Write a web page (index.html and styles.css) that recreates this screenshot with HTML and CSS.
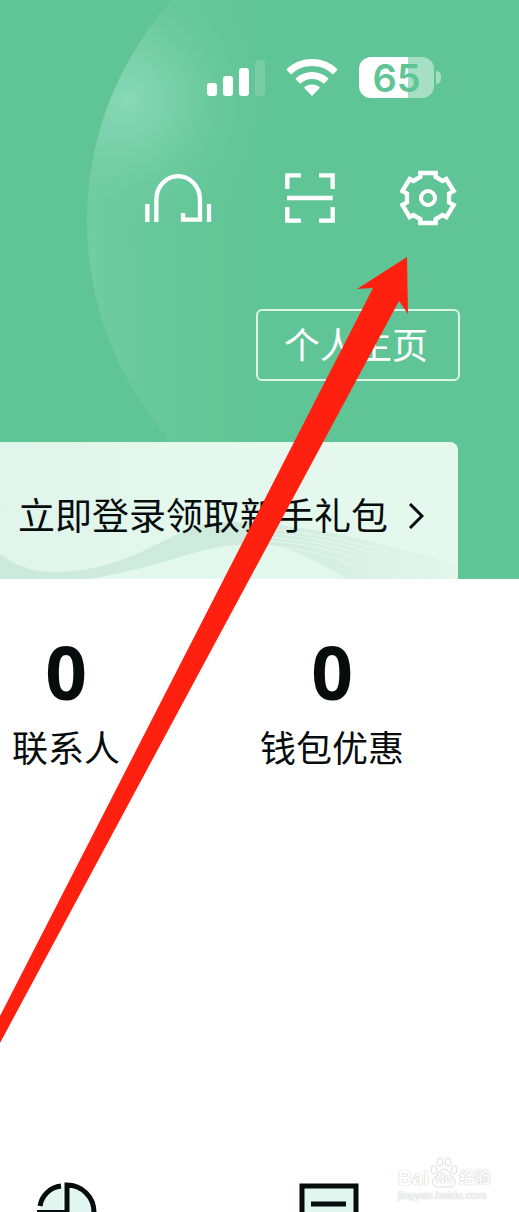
FILE: index.html
```html
<!DOCTYPE html>
<html lang="zh-CN">
<head>
    <meta charset="UTF-8">
    <meta name="viewport" content="width=device-width, initial-scale=1.0">
    <title>个人主页</title>
    <link rel="stylesheet" href="styles.css">
</head>
<body>
    <header class="header">
        <svg class="bubble" viewBox="0 0 660 660" aria-hidden="true">
            <defs>
                <radialGradient id="glow" gradientUnits="userSpaceOnUse" cx="40" cy="208" r="150">
                    <stop offset="0" stop-color="#8cdaba" stop-opacity="0.9"/>
                    <stop offset="0.4" stop-color="#7cd2ac" stop-opacity="0.6"/>
                    <stop offset="1" stop-color="#60c596" stop-opacity="0"/>
                </radialGradient>
                <linearGradient id="rim" x1="0" y1="0" x2="0.28" y2="0">
                    <stop offset="0" stop-color="#72cda3"/>
                    <stop offset="1" stop-color="#60c596" stop-opacity="0"/>
                </linearGradient>
            </defs>
            <circle cx="330" cy="330" r="330" fill="url(#rim)"/>
            <circle cx="330" cy="330" r="330" fill="url(#glow)"/>
        </svg>

        <div class="status">
            <svg class="signal" viewBox="0 0 58 38" aria-hidden="true">
                <rect x="0" y="24" width="10" height="13" rx="3"/>
                <rect x="16" y="17" width="10" height="20" rx="3"/>
                <rect x="32" y="9" width="10" height="28" rx="3"/>
                <rect x="48" y="1" width="10" height="36" rx="3" opacity="0.15"/>
            </svg>
            <svg class="wifi" viewBox="0 0 50 38" aria-hidden="true">
                <path d="M1.7 12.9A33.5 33.5 0 0 1 48.3 12.9M10.8 22.3A20.5 20.5 0 0 1 39.2 22.3" fill="none" stroke="#fff" stroke-width="7"/>
                <path d="M17 28.7A11.5 11.5 0 0 1 33 28.7L25 37Z"/>
            </svg>
            <div class="battery"><span>65</span></div>
        </div>

        <nav class="tools">
            <button class="tool tool-service" aria-label="客服">
                <svg viewBox="45 45 225 168"><path d="M52 147V201M237 147V201M79 201V134A65 70 0 0 1 210 134V194H159V174" stroke-width="13"/></svg>
            </button>
            <button class="tool" aria-label="扫一扫">
                <svg viewBox="450 45 180 168"><path d="M472 102V61H513M567 61H608V102M472 156V197H513M567 197H608V156M471 129H608" stroke-width="13"/></svg>
            </button>
            <button class="tool" aria-label="设置">
                <svg viewBox="180 45 180 168">
                    <path d="M241 54H287V66L308 78L319 72L341 108L327 116V142L341 150L319 186L308 180L287 192V204H241V192L220 180L209 186L187 150L201 142V116L187 108L209 72L220 78L241 66Z" stroke-width="13"/>
                    <circle cx="264" cy="129" r="21" stroke-width="12"/>
                </svg>
            </button>
        </nav>

        <button class="home">个人主页</button>

        <a class="gift" href="#">
            <svg class="waves" viewBox="0 0 458 137" preserveAspectRatio="none" aria-hidden="true">
                <defs>
                    <linearGradient id="wave" x1="0" y1="0" x2="1" y2="0">
                        <stop offset="0" stop-color="#cbeadb"/>
                        <stop offset="0.55" stop-color="#d0ebde"/>
                        <stop offset="1" stop-color="#e2f6eb"/>
                    </linearGradient>
                </defs>
                <path d="M0 112Q25 132 62 130C140 126 170 84 220 80C300 78 400 105 458 124V137H346C290 98 240 98 190 112Q130 132 90 137H0Z" fill="url(#wave)"/>
                <path d="M190 112Q260 92 300 112Q325 124 346 137H90Q140 128 190 112Z" fill="#e2f8ec"/>
                <path d="M250 86Q350 90 458 134M250 90Q350 94 440 137M250 94Q350 98 420 137M250 98Q340 100 400 137M250 102Q330 106 380 137" fill="none" stroke="#e4f8ed"/>
            </svg>
            <span>立即登录领取新手礼包</span>
            <svg class="chevron" viewBox="0 0 16 26" aria-hidden="true"><path d="M2 1L14 13L2 25"/></svg>
        </a>
    </header>

    <main>
        <section class="stats">
            <div class="stat"><strong>0</strong><span>联系人</span></div>
            <div class="stat"><strong>0</strong><span>钱包优惠</span></div>
        </section>
        <section class="menu">
            <svg viewBox="0 0 60 30" aria-hidden="true">
                <path d="M3 27A28 28 0 0 1 26 4V28H3Z" fill="#e1f6ee"/>
                <path d="M30 3A27 27 0 0 1 57 30H30Z" fill="#e1f6ee"/>
                <path d="M3 24A24 24 0 0 1 24 4M30 30V3A27 27 0 0 1 57 30" fill="none" stroke="#070c0d" stroke-width="5"/>
                <path d="M0 29H28" stroke="#070c0d" stroke-width="2"/>
            </svg>
            <svg viewBox="0 0 60 30" aria-hidden="true">
                <path d="M3 30V4H57V30" fill="#e1f6ee" stroke="#070c0d" stroke-width="5"/>
                <path d="M12 22H47" stroke="#070c0d" stroke-width="5"/>
            </svg>
        </section>
    </main>

    <div class="watermark">
        <div class="brand">
            <span>Bai</span>
            <span class="paw">
                <svg viewBox="0 0 28 31" aria-hidden="true">
                    <ellipse cx="4" cy="13" rx="3" ry="4"/>
                    <ellipse cx="10" cy="5" rx="3" ry="4"/>
                    <ellipse cx="18" cy="5" rx="3" ry="4"/>
                    <ellipse cx="24" cy="13" rx="3" ry="4"/>
                    <path d="M14 12C19 12 19 18 23 20C27 24 25 30 20 30H8C2 30 1 24 5 20C9 18 9 12 14 12Z"/>
                </svg>
                <b>du</b>
            </span>
            <span class="cn">经验</span>
        </div>
        <div class="site">jingyan.baidu.com</div>
    </div>

    <svg class="arrow" viewBox="0 0 519 1212" aria-hidden="true">
        <path d="M407 257L357 289L373 288L0 1016V1043L399 301L408 314Z" fill="#ff2010"/>
    </svg>
</body>
</html>
```
FILE: styles.css
```css
* {
    box-sizing: border-box;
}
body {
    margin: 0;
    position: relative;
    background: #fff;
    color: #070c0d;
    font-family: "Noto Sans CJK SC", sans-serif;
    font-size: 36px;
    line-height: 48px;
    overflow-x: hidden;
}
svg {
    display: block;
}
button {
    padding: 0;
    border: none;
    background: none;
    color: #fff;
    font: inherit;
    cursor: pointer;
}
.header {
    position: relative;
    display: flex;
    flex-direction: column;
    align-items: flex-end;
    padding: 57px 59px 0 0;
    background: #60c596;
    overflow: hidden;
}
.bubble {
    position: absolute;
    top: -109px;
    left: 87px;
    width: 660px;
}
.status,
.tools,
.home,
.gift {
    position: relative;
}
.status {
    display: flex;
    align-items: center;
    gap: 22px;
    margin-right: 26px;
    fill: #fff;
}
.signal {
    width: 58px;
    height: 38px;
}
.wifi {
    width: 50px;
    height: 38px;
}
.battery {
    position: relative;
    width: 75px;
    height: 41px;
    border-radius: 12px;
    background: linear-gradient(to right, #fff 49px, #a6dfc4 49px);
    color: #60c596;
    font: 600 38px/42px Inter, sans-serif;
    text-align: center;
}
.battery::after {
    content: "";
    position: absolute;
    top: 14px;
    right: -7px;
    width: 5px;
    height: 13px;
    border-radius: 0 6px 6px 0;
    background: #a6dfc4;
}
.tools {
    display: flex;
    gap: 60px;
    margin-top: 72px;
}
.tool {
    width: 60px;
    height: 56px;
}
.tool-service {
    width: 75px;
}
.tool svg {
    width: 100%;
    height: 100%;
    fill: none;
    stroke: #fff;
}
.home {
    width: 204px;
    height: 72px;
    margin-top: 83px;
    padding: 0 4px 4px 0;
    border: 2px solid #d9f5e7;
    border-radius: 6px;
}
.gift {
    display: flex;
    align-items: center;
    align-self: stretch;
    height: 137px;
    margin: 61px 2px 0 0;
    padding: 10px 34px 0 18px;
    border-radius: 0 8px 0 0;
    background: linear-gradient(to right, #dff4ea, #e4f8ed 40%);
    color: #070c0d;
    font-size: 37px;
    text-decoration: none;
    white-space: nowrap;
    overflow: hidden;
}
.gift span {
    position: relative;
    padding-bottom: 4px;
}
.waves {
    position: absolute;
    top: 0;
    left: 0;
    width: 100%;
    height: 100%;
}
.chevron {
    position: relative;
    width: 16px;
    height: 26px;
    margin-left: auto;
    fill: none;
    stroke: #070c0d;
    stroke-width: 3;
}
.stats {
    display: flex;
    gap: 140px;
    padding: 57px 12px 0;
}
.stat {
    display: flex;
    flex-direction: column;
    align-items: center;
    white-space: nowrap;
}
.stat strong {
    font: 700 73px/72px "Noto Sans", sans-serif;
}
.stat span {
    margin-top: 14px;
}
.menu {
    display: flex;
    gap: 202px;
    padding: 412px 0 0 37px;
}
.menu svg {
    width: 60px;
    height: 30px;
}
.watermark {
    position: absolute;
    right: 28px;
    bottom: 10px;
    color: #fff;
    font: 700 12px/14px "Liberation Sans", "Noto Sans CJK SC", sans-serif;
    text-shadow: 0 0 1px #bbb, 0 0 1px #ccc;
}
.brand {
    display: flex;
    align-items: flex-end;
    font-size: 20px;
    line-height: 20px;
}
.paw {
    position: relative;
    width: 28px;
    margin: 0 1px;
}
.paw svg {
    width: 28px;
    height: 31px;
    fill: #fff;
    stroke: #ddd;
}
.paw b {
    position: absolute;
    left: 6px;
    bottom: 0;
    font-size: 14px;
}
.cn {
    font-size: 16px;
}
.site {
    font-weight: 400;
    font-size: 11px;
}
.arrow {
    position: absolute;
    top: 0;
    left: 0;
    width: 100%;
    pointer-events: none;
}
```
